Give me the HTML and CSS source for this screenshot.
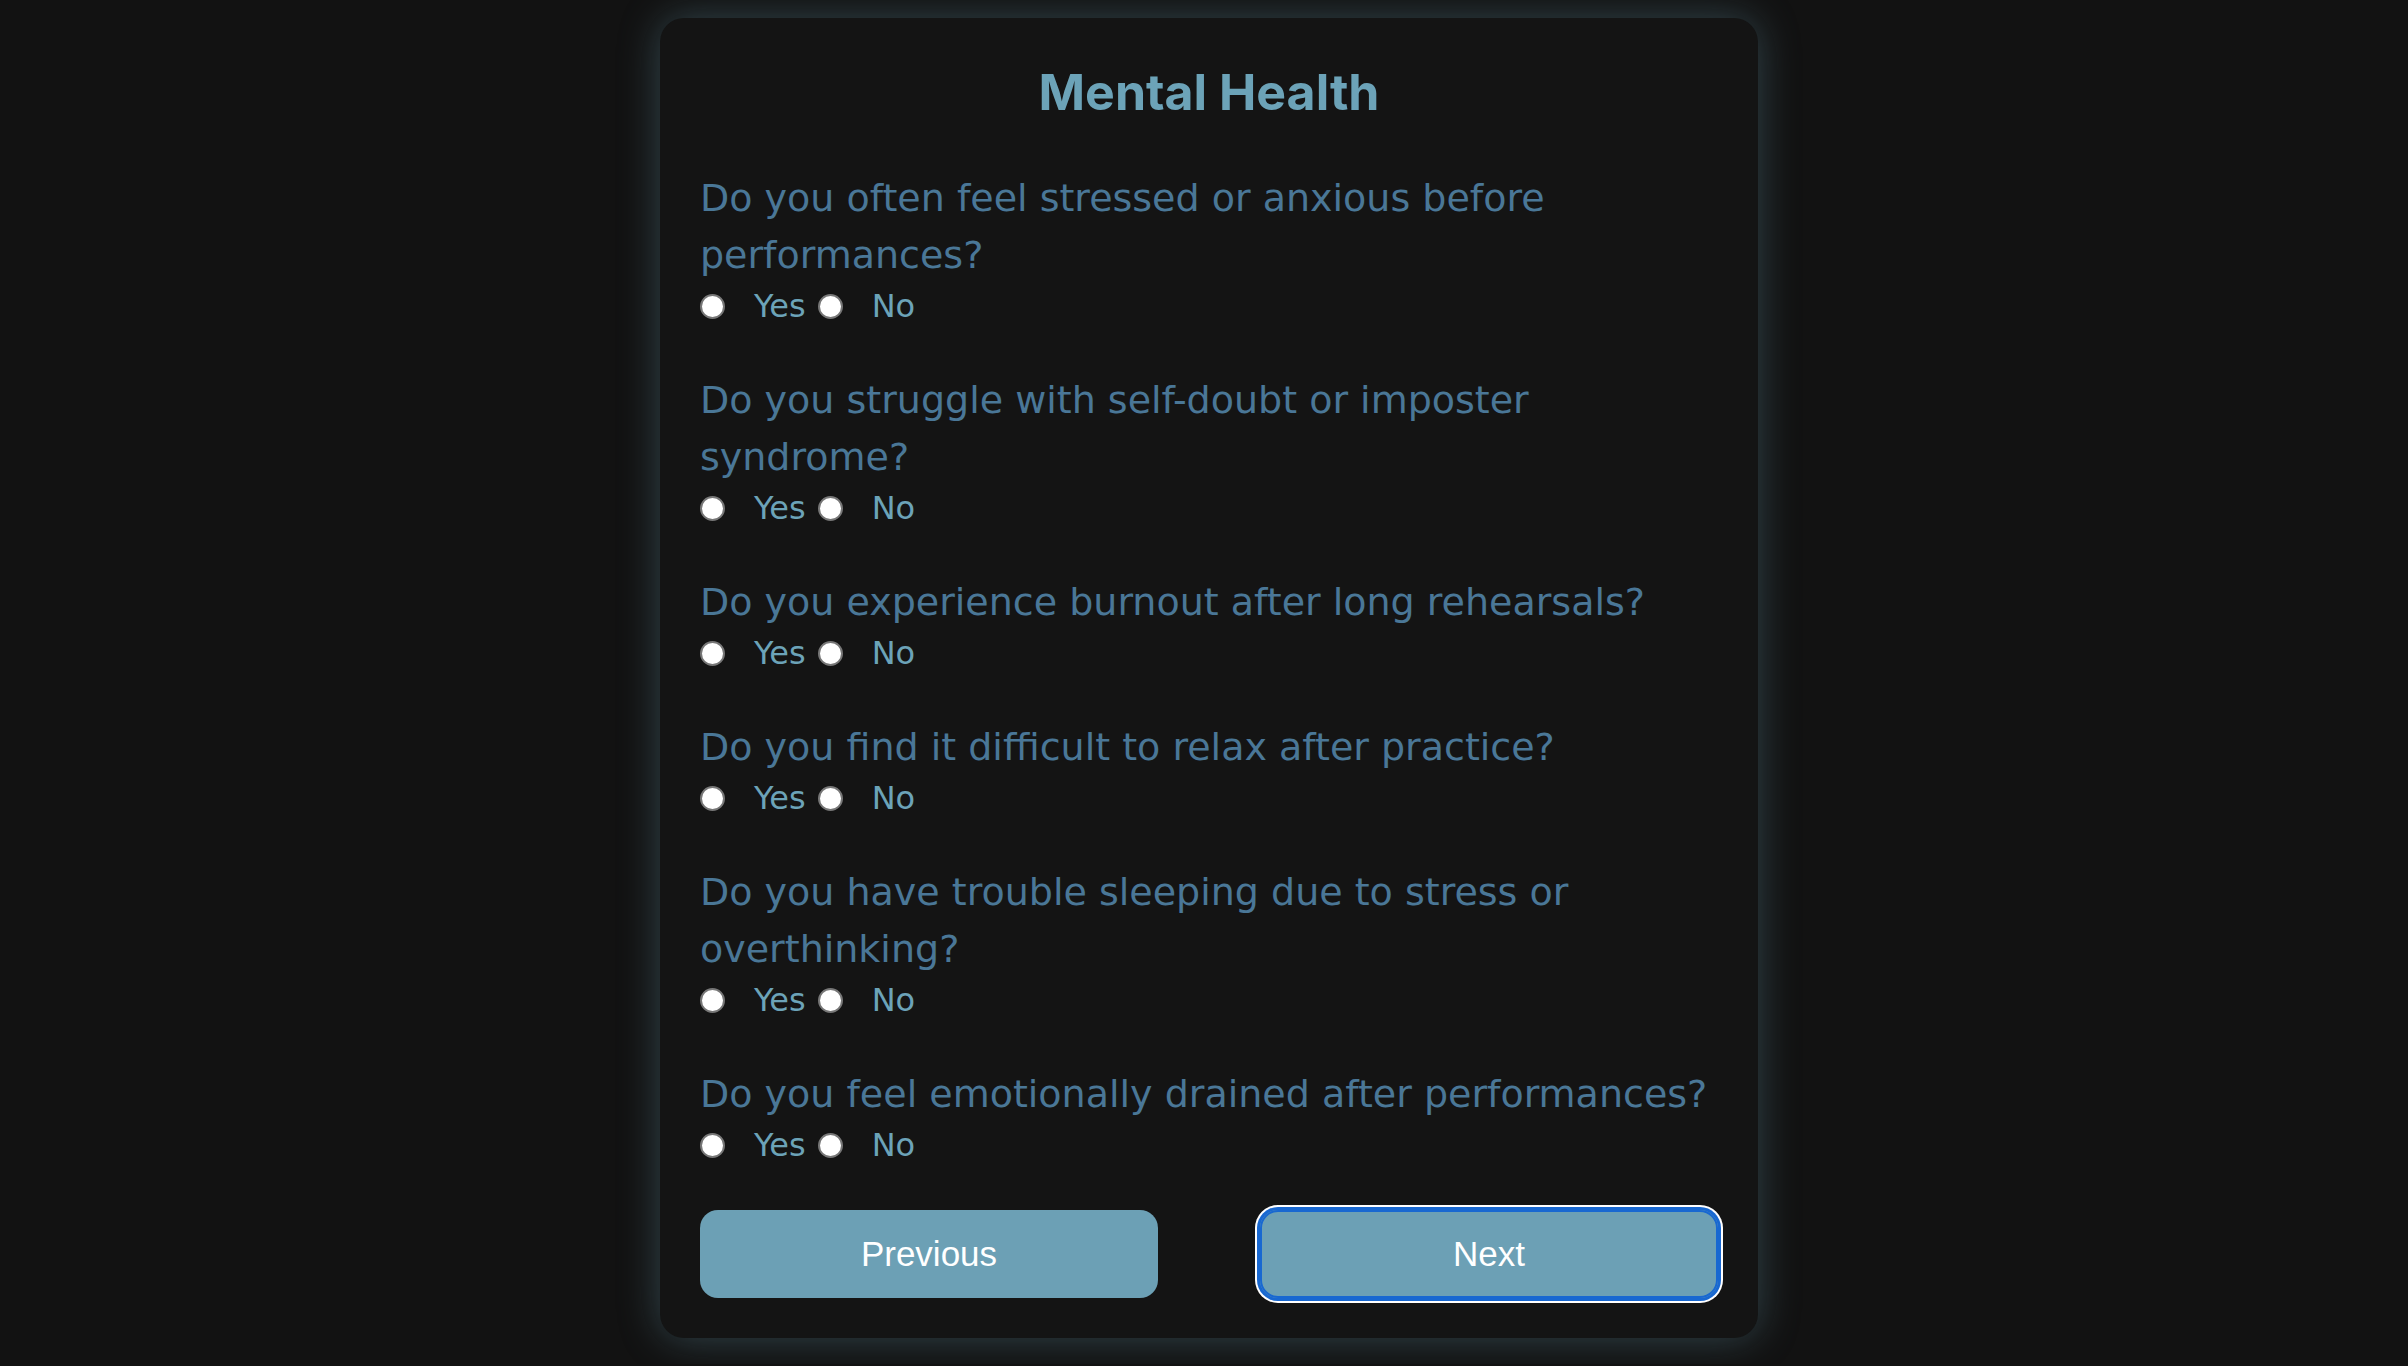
FILE: index.html
```html
<!DOCTYPE html>
<html lang="en">
<head>
<meta charset="utf-8">
<title>Mental Health</title>
<link rel="stylesheet" href="styles.css">
</head>
<body>
<main class="card">
  <h1 class="title">Mental Health</h1>
  <div class="questions">
    <div class="question">
      <p class="q-text">Do you often feel stressed or anxious before performances?</p>
      <div class="options">
        <input class="radio" type="radio" name="q1" id="q1y"><label class="opt" for="q1y">Yes</label>
        <input class="radio" type="radio" name="q1" id="q1n"><label class="opt" for="q1n">No</label>
      </div>
    </div>
    <div class="question">
      <p class="q-text">Do you struggle with self-doubt or imposter syndrome?</p>
      <div class="options">
        <input class="radio" type="radio" name="q2" id="q2y"><label class="opt" for="q2y">Yes</label>
        <input class="radio" type="radio" name="q2" id="q2n"><label class="opt" for="q2n">No</label>
      </div>
    </div>
    <div class="question">
      <p class="q-text">Do you experience burnout after long rehearsals?</p>
      <div class="options">
        <input class="radio" type="radio" name="q3" id="q3y"><label class="opt" for="q3y">Yes</label>
        <input class="radio" type="radio" name="q3" id="q3n"><label class="opt" for="q3n">No</label>
      </div>
    </div>
    <div class="question">
      <p class="q-text">Do you find it difficult to relax after practice?</p>
      <div class="options">
        <input class="radio" type="radio" name="q4" id="q4y"><label class="opt" for="q4y">Yes</label>
        <input class="radio" type="radio" name="q4" id="q4n"><label class="opt" for="q4n">No</label>
      </div>
    </div>
    <div class="question">
      <p class="q-text">Do you have trouble sleeping due to stress or overthinking?</p>
      <div class="options">
        <input class="radio" type="radio" name="q5" id="q5y"><label class="opt" for="q5y">Yes</label>
        <input class="radio" type="radio" name="q5" id="q5n"><label class="opt" for="q5n">No</label>
      </div>
    </div>
    <div class="question">
      <p class="q-text">Do you feel emotionally drained after performances?</p>
      <div class="options">
        <input class="radio" type="radio" name="q6" id="q6y"><label class="opt" for="q6y">Yes</label>
        <input class="radio" type="radio" name="q6" id="q6n"><label class="opt" for="q6n">No</label>
      </div>
    </div>
  </div>
  <div class="nav">
    <button class="btn" type="button">Previous</button>
    <button class="btn btn-focus" type="button">Next</button>
  </div>
</main>
</body>
</html>
```
FILE: styles.css
```css
html, body {
  margin: 0;
  background: #121212;
}

body {
  display: flex;
  justify-content: center;
  align-items: flex-start;
  padding: 18px 0 26px 10px;
  font-family: "DejaVu Sans", "Liberation Sans", sans-serif;
}

.card {
  box-sizing: border-box;
  width: 1098px;
  padding: 43px 40px 40px;
  background: #141414;
  border-radius: 24px;
  box-shadow: 0 0 40px rgba(108, 160, 181, 0.36);
}

.title {
  margin: 0 0 47px;
  font-family: Inter, "DejaVu Sans", sans-serif;
  font-weight: 700;
  font-size: 50px;
  line-height: 62px;
  text-align: center;
  color: #6ca3b8;
}

.questions {
  display: flex;
  flex-direction: column;
  gap: 43px;
}

.q-text {
  margin: 0;
  font-size: 38px;
  line-height: 57px;
  color: #4a7797;
}

.options {
  display: flex;
  align-items: center;
  height: 45px;
}

.radio {
  appearance: none;
  -webkit-appearance: none;
  box-sizing: border-box;
  width: 25px;
  height: 25px;
  margin: 0;
  border: 2px solid #777777;
  border-radius: 50%;
  background: #ffffff;
  flex: none;
}

.opt {
  margin: 0 12px 0 29px;
  font-size: 32px;
  line-height: 45px;
  color: #6ca3b8;
}

.nav {
  display: flex;
  justify-content: space-between;
  margin-top: 42px;
}

.btn {
  width: 458px;
  height: 88px;
  border: none;
  border-radius: 18px;
  background: #6ca0b5;
  color: #ffffff;
  font-family: "Liberation Sans", Arial, sans-serif;
  font-size: 35px;
  padding: 0;
}

.btn-focus {
  box-shadow: inset 0 0 0 2px #1868d1, 0 0 0 3px #1868d1, 0 0 0 5px #ffffff;
}
```
